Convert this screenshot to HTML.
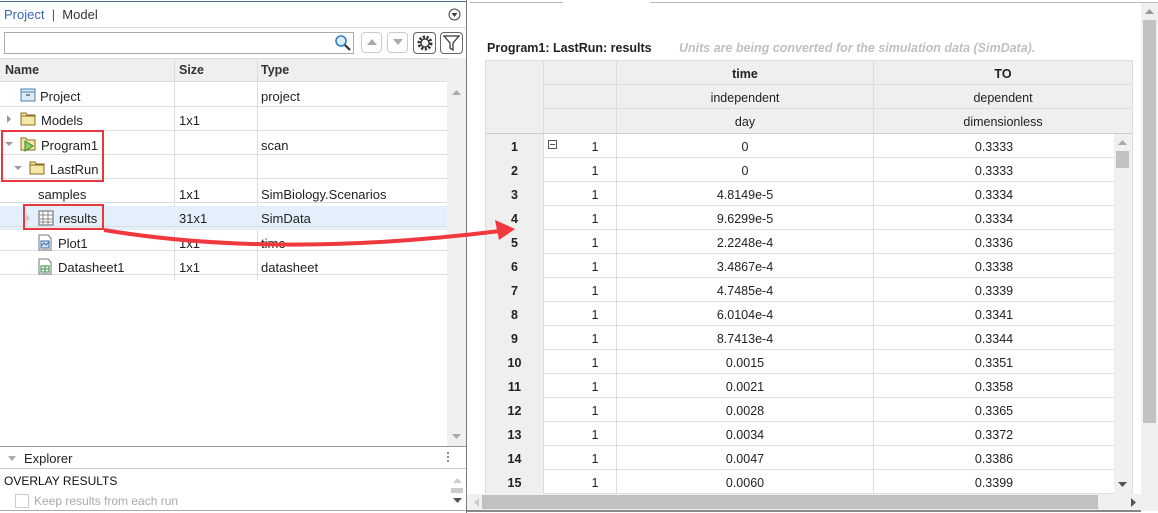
<!DOCTYPE html>
<html><head><style>
*{box-sizing:border-box;margin:0;padding:0}
body{width:1158px;height:513px;position:relative;overflow:hidden;background:#fff;font-family:"Liberation Sans",Arial,sans-serif;font-size:12.5px;color:#222}
.a{position:absolute}
.c{position:absolute;text-align:center;line-height:24px}
</style></head><body>
<div class="a" style="left:0;top:0;width:467px;height:513px;border-right:1px solid #7a7a7a"></div>
<div class="a" style="left:0;top:1px;width:466px;height:1px;background:#4a6b8a"></div>
<div class="a" style="left:4px;top:7px;font-size:13px;color:#3867b4">Project <span style="color:#555">&nbsp;|&nbsp; </span><span style="color:#333">Model</span></div>
<svg class="a" style="left:448px;top:8px" width="13" height="13"><circle cx="6.5" cy="6.5" r="5.5" fill="none" stroke="#444"/><path d="M3.5 5h6l-3 4z" fill="#444"/></svg>
<div class="a" style="left:0;top:27px;width:466px;height:1px;background:#ddd"></div>
<div class="a" style="left:4px;top:32px;width:350px;height:22px;border:1px solid #aaa;background:#fff"></div>
<svg class="a" style="left:334px;top:34px" width="18" height="18"><circle cx="7" cy="7" r="5" fill="#dfeefa" stroke="#2d7fc4" stroke-width="1.6"/><path d="M11 11l5 5" stroke="#333" stroke-width="2.2"/></svg>
<div class="a" style="left:361px;top:32px;width:21px;height:21px;border:1px solid #ccc;border-radius:4px"></div>
<svg class="a" style="left:366px;top:38px" width="12" height="8"><path d="M1 7h10L6 1z" fill="#aaa"/></svg>
<div class="a" style="left:387px;top:32px;width:21px;height:21px;border:1px solid #ccc;border-radius:4px"></div>
<svg class="a" style="left:392px;top:38px" width="12" height="8"><path d="M1 1h10L6 7z" fill="#aaa"/></svg>
<div class="a" style="left:413px;top:32px;width:23px;height:22px;border:1px solid #666;border-radius:4px"></div>
<svg class="a" style="left:416px;top:34px" width="18" height="18"><circle cx="9" cy="9" r="6" fill="none" stroke="#333" stroke-width="3" stroke-dasharray="2.2 1.5"/><circle cx="9" cy="9" r="4" fill="#fff" stroke="#333" stroke-width="1.3"/></svg>
<div class="a" style="left:440px;top:32px;width:23px;height:22px;border:1px solid #666;border-radius:4px"></div>
<svg class="a" style="left:443px;top:35px" width="17" height="16"><path d="M1 1h15l-6 7v7l-3-2v-5z" fill="none" stroke="#333" stroke-width="1.2"/></svg>
<div class="a" style="left:0;top:58px;width:448px;height:24px;background:#efefef;border-bottom:1px solid #ddd;border-top:1px solid #ddd"></div>
<div class="a" style="left:5px;top:63px;font-weight:bold;color:#333">Name</div>
<div class="a" style="left:179px;top:63px;font-weight:bold;color:#333">Size</div>
<div class="a" style="left:261px;top:63px;font-weight:bold;color:#333">Type</div>
<div class="a" style="left:174px;top:58px;width:1px;height:222px;background:#ddd"></div>
<div class="a" style="left:257px;top:58px;width:1px;height:222px;background:#ddd"></div>
<div class="a" style="left:447px;top:58px;width:19px;height:389px;background:#f0f0f0"></div>
<svg class="a" style="left:452px;top:90px" width="9" height="6"><path d="M0 5h9L4.5 0z" fill="#aaa"/></svg>
<svg class="a" style="left:452px;top:434px" width="9" height="6"><path d="M0 0h9L4.5 5z" fill="#aaa"/></svg>
<div class="a" style="left:0;top:206px;width:447px;height:24px;background:#e3effa"></div>
<div class="a" style="left:0;top:83px;width:447px;height:197px;background:repeating-linear-gradient(to bottom,transparent 0 23px,#ddd 23px 24px)"></div>
<svg class="a" style="left:20px;top:87px" width="17" height="16"><rect x="1" y="2" width="14" height="12" fill="#dceaf6" stroke="#4d7fb0"/><path d="M1 5h14" stroke="#4d7fb0"/><path d="M6 8h4" stroke="#333"/></svg>
<div class="a" style="left:40px;top:89px;font-size:13px">Project</div><div class="a" style="left:261px;top:89px;font-size:13px">project</div>
<svg class="a" style="left:6px;top:115px" width="6" height="8"><path d="M1 0l4 4-4 4z" fill="#999"/></svg>
<svg class="a" style="left:20px;top:111px" width="17" height="15"><path d="M1 2h5l1 2h8v10H1z" fill="#f5e7a8" stroke="#8a6b1e"/><path d="M1 5h14" stroke="#8a6b1e"/></svg>
<div class="a" style="left:41px;top:113px;font-size:13px">Models</div><div class="a" style="left:179px;top:113px;font-size:13px">1x1</div>
<svg class="a" style="left:5px;top:141px" width="8" height="6"><path d="M0 1h8L4 5z" fill="#999"/></svg>
<svg class="a" style="left:20px;top:136px" width="17" height="16"><path d="M1 2h5l1 2h8v10H1z" fill="#f5e7a8" stroke="#8a6b1e"/><path d="M5 5v10l8-5z" fill="#8fd16a" stroke="#2f8a22"/></svg>
<div class="a" style="left:41px;top:138px;font-size:13px">Program1</div><div class="a" style="left:261px;top:138px;font-size:13px">scan</div>
<svg class="a" style="left:14px;top:165px" width="8" height="6"><path d="M0 1h8L4 5z" fill="#999"/></svg>
<svg class="a" style="left:29px;top:160px" width="17" height="15"><path d="M1 2h5l1 2h8v10H1z" fill="#f5e7a8" stroke="#8a6b1e"/><path d="M1 5h14" stroke="#8a6b1e"/></svg>
<div class="a" style="left:50px;top:162px;font-size:13px">LastRun</div>
<div class="a" style="left:38px;top:187px;font-size:13px">samples</div><div class="a" style="left:179px;top:187px;font-size:13px">1x1</div><div class="a" style="left:261px;top:187px;font-size:13px">SimBiology.Scenarios</div>
<svg class="a" style="left:25px;top:214px" width="6" height="8"><path d="M1 0l4 4-4 4z" fill="#ccc"/></svg>
<svg class="a" style="left:38px;top:210px" width="16" height="16"><rect x="1" y="1" width="14" height="14" fill="#fff" stroke="#666"/><path d="M1 5h14M1 9h14M1 12h14M5 1v14M10 1v14" stroke="#888"/></svg>
<div class="a" style="left:59px;top:211px;font-size:13px">results</div><div class="a" style="left:179px;top:211px;font-size:13px">31x1</div><div class="a" style="left:261px;top:211px;font-size:13px">SimData</div>
<svg class="a" style="left:38px;top:234px" width="14" height="17"><path d="M1 1h9l3 3v12H1z" fill="#fff" stroke="#777"/><rect x="3" y="7" width="8" height="7" fill="#cfe3f5" stroke="#3a6ea5"/><path d="M3 12l3-3 2 2 3-3" stroke="#3a6ea5" fill="none"/></svg>
<div class="a" style="left:58px;top:236px;font-size:13px">Plot1</div><div class="a" style="left:179px;top:236px;font-size:13px">1x1</div><div class="a" style="left:261px;top:236px;font-size:13px">time</div>
<svg class="a" style="left:38px;top:258px" width="14" height="17"><path d="M1 1h9l3 3v12H1z" fill="#fff" stroke="#777"/><rect x="3" y="8" width="8" height="6" fill="#fff" stroke="#2e8a3e"/><path d="M3 11h8M7 8v6" stroke="#2e8a3e"/></svg>
<div class="a" style="left:58px;top:260px;font-size:13px">Datasheet1</div><div class="a" style="left:179px;top:260px;font-size:13px">1x1</div><div class="a" style="left:261px;top:260px;font-size:13px">datasheet</div>
<div class="a" style="left:1px;top:130px;width:103px;height:52px;border:2px solid #e8383d"></div>
<div class="a" style="left:23px;top:204px;width:81px;height:26px;border:2px solid #e8383d"></div>
<div class="a" style="left:0;top:446px;width:466px;height:1px;background:#999"></div>
<div class="a" style="left:0;top:468px;width:466px;height:1px;background:#ccc"></div>
<svg class="a" style="left:8px;top:456px" width="8" height="5"><path d="M0 0h8L4 5z" fill="#aaa"/></svg>
<div class="a" style="left:24px;top:451px;color:#222;font-size:13px">Explorer</div>
<div class="a" style="left:447px;top:451px;width:2px;height:12px;background:radial-gradient(circle,#666 1px,transparent 1px) 0 0/2px 4px"></div>
<div class="a" style="left:4px;top:474px;font-size:12px;color:#111">OVERLAY RESULTS</div>
<div class="a" style="left:15px;top:494px;width:14px;height:14px;border:1px solid #ccc"></div>
<div class="a" style="left:34px;top:494px;font-size:12px;color:#aaa">Keep results from each run</div>
<svg class="a" style="left:453px;top:478px" width="9" height="6"><path d="M0 5h9L4.5 0z" fill="#ccc"/></svg>
<div class="a" style="left:451px;top:488px;width:12px;height:5px;background:#ccc"></div>
<svg class="a" style="left:453px;top:498px" width="9" height="6"><path d="M0 0h9L4.5 5z" fill="#555"/></svg>
<div class="a" style="left:0;top:510px;width:466px;height:1px;background:#aaa"></div>
<div class="a" style="left:470px;top:2px;width:93px;height:1px;background:#bbb"></div>
<div class="a" style="left:650px;top:2px;width:508px;height:1px;background:#bbb"></div>
<div class="a" style="left:1141px;top:3px;width:17px;height:508px;background:#f0f0f0"></div>
<svg class="a" style="left:1145px;top:9px" width="9" height="6"><path d="M0 5h9L4.5 0z" fill="#999"/></svg>
<div class="a" style="left:1143px;top:20px;width:13px;height:403px;background:#c1c1c1"></div>
<div class="a" style="left:487px;top:41px;font-weight:bold;font-size:12.5px;color:#222">Program1: LastRun: results</div>
<div class="a" style="left:679px;top:41px;font-style:italic;font-weight:bold;font-size:12.5px;color:#c0c0c0">Units are being converted for the simulation data (SimData).</div>
<div class="a" style="left:485px;top:60px;width:648px;height:435px;border:1px solid #ddd;background:#efefef"></div>
<div class="a" style="left:543px;top:134px;width:571px;height:360px;background:#fff"></div>
<div class="a" style="left:543px;top:61px;width:1px;height:433px;background:#ddd"></div>
<div class="a" style="left:616px;top:61px;width:1px;height:433px;background:#ddd"></div>
<div class="a" style="left:873px;top:61px;width:1px;height:433px;background:#ddd"></div>
<div class="a" style="left:543px;top:84px;width:589px;height:1px;background:#ddd"></div>
<div class="a" style="left:543px;top:108px;width:589px;height:1px;background:#ddd"></div>
<div class="a" style="left:486px;top:133px;width:646px;height:1px;background:#ccc"></div>
<div class="a" style="left:543px;top:134px;width:571px;height:360px;background:repeating-linear-gradient(to bottom,transparent 0 23px,#ddd 23px 24px)"></div>
<div class="c" style="left:617px;top:62px;width:256px;font-weight:bold">time</div><div class="c" style="left:874px;top:62px;width:258px;font-weight:bold">TO</div>
<div class="c" style="left:617px;top:86px;width:256px">independent</div><div class="c" style="left:874px;top:86px;width:258px">dependent</div>
<div class="c" style="left:617px;top:110px;width:256px">day</div><div class="c" style="left:874px;top:110px;width:258px">dimensionless</div>
<div class="a" style="left:548px;top:140px;width:9px;height:9px;border:1px solid #555"></div><div class="a" style="left:550px;top:144px;width:5px;height:1px;background:#555"></div>
<div id="rows"></div>
<div class="a" style="left:1114px;top:134px;width:18px;height:360px;background:#f0f0f0"></div>
<svg class="a" style="left:1118px;top:140px" width="9" height="6"><path d="M0 5h9L4.5 0z" fill="#aaa"/></svg>
<div class="a" style="left:1116px;top:151px;width:13px;height:17px;background:#c1c1c1"></div>
<svg class="a" style="left:1118px;top:482px" width="9" height="6"><path d="M0 0h9L4.5 5z" fill="#555"/></svg>
<div class="a" style="left:467px;top:494px;width:674px;height:16px;background:#f0f0f0"></div>
<svg class="a" style="left:474px;top:498px" width="5" height="9"><path d="M5 0v9L0 4.5z" fill="#ccc"/></svg>
<div class="a" style="left:482px;top:495px;width:616px;height:14px;background:#c1c1c1"></div>
<svg class="a" style="left:1131px;top:498px" width="5" height="9"><path d="M0 0v9l5-4.5z" fill="#555"/></svg>
<div class="a" style="left:467px;top:510px;width:674px;height:2px;background:#888"></div>
<script>
var t=["0","0","4.8149e-5","9.6299e-5","2.2248e-4","3.4867e-4","4.7485e-4","6.0104e-4","8.7413e-4","0.0015","0.0021","0.0028","0.0034","0.0047","0.0060"];
var v=["0.3333","0.3333","0.3334","0.3334","0.3336","0.3338","0.3339","0.3341","0.3344","0.3351","0.3358","0.3365","0.3372","0.3386","0.3399"];
var h="";for(var i=0;i<15;i++){var y=135+i*24;
h+='<div class="c" style="left:486px;top:'+y+'px;width:57px;font-weight:bold">'+(i+1)+'</div>'+
'<div class="c" style="left:580px;top:'+y+'px;width:30px">1</div>'+
'<div class="c" style="left:617px;top:'+y+'px;width:256px">'+t[i]+'</div>'+
'<div class="c" style="left:874px;top:'+y+'px;width:240px">'+v[i]+'</div>';}
document.getElementById("rows").innerHTML=h;
</script>
<svg class="a" style="left:0;top:0" width="1158" height="513"><path d="M104 230 C200 246 330 252 500 231" fill="none" stroke="#f0393f" stroke-width="4"/><path d="M515 229 L495 220 L499 240 Z" fill="#f0393f"/></svg>
</body></html>
